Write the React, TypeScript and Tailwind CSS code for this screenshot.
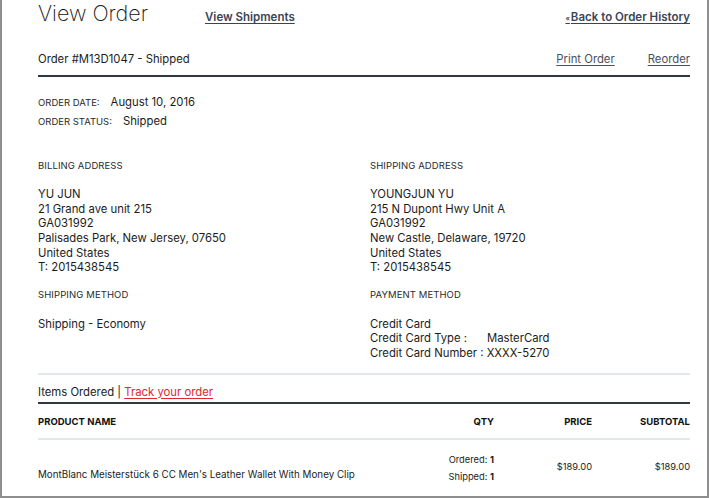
import React from "react";

function Label({ children }: { children: React.ReactNode }) {
  return (
    <div className="h-[14px] flex items-center text-[9.5px] uppercase text-[#2a2a2a] tracking-[0.1px]">
      {children}
    </div>
  );
}

export default function App() {
  return (
    <div className="w-[709px] h-[498px] border-x-2 border-b-2 border-[#8e8e8e] bg-white pl-[36px] pr-[17px] overflow-hidden text-[#1c1c1c] font-[Inter,sans-serif] flex flex-col">
      {/* Title row */}
      <div className="flex items-baseline">
        <div className="w-[167px] text-[21.5px] leading-[26px] font-extralight text-[#111]">View Order</div>
        <a className="text-[11.5px] font-semibold text-[#3b4457] underline underline-offset-2">View Shipments</a>
        <a className="ml-auto text-[11.5px] font-semibold text-[#3b4457] underline underline-offset-2">
          <span className="text-[7px] mr-[1px]">«</span>Back to Order History
        </a>
      </div>

      {/* Order row */}
      <div className="mt-[23px] h-[20px] flex items-center text-[11.3px]">
        <span>Order #M13D1047 - Shipped</span>
        <a className="ml-auto text-[#4a5060] underline underline-offset-2">Print Order</a>
        <a className="ml-[33px] text-[#4a5060] underline underline-offset-2">Reorder</a>
      </div>
      <div className="mt-[6px] h-[2px] bg-[#2f3646]" />

      {/* Order date/status */}
      <div className="mt-[16px] flex flex-col text-[11.3px]">
        <div className="h-[19px] flex items-center">
          <span className="text-[9.5px] uppercase text-[#2a2a2a]">Order Date:</span>
          <span className="ml-[11px]">August 10, 2016</span>
        </div>
        <div className="h-[19px] flex items-center">
          <span className="text-[9.5px] uppercase text-[#2a2a2a]">Order Status:</span>
          <span className="ml-[11px]">Shipped</span>
        </div>
      </div>

      {/* Addresses */}
      <div className="mt-[28px] grid grid-cols-[332px_1fr] text-[11.3px] leading-[14.6px]">
        <div>
          <Label>Billing Address</Label>
          <div className="mt-[14px]">
            <div>YU JUN</div>
            <div>21 Grand ave unit 215</div>
            <div>GA031992</div>
            <div>Palisades Park, New Jersey, 07650</div>
            <div>United States</div>
            <div>T: 2015438545</div>
          </div>
          <div className="mt-[13px]">
            <Label>Shipping Method</Label>
          </div>
          <div className="mt-[15px]">Shipping - Economy</div>
        </div>
        <div>
          <Label>Shipping Address</Label>
          <div className="mt-[14px]">
            <div>YOUNGJUN YU</div>
            <div>215 N Dupont Hwy Unit A</div>
            <div>GA031992</div>
            <div>New Castle, Delaware, 19720</div>
            <div>United States</div>
            <div>T: 2015438545</div>
          </div>
          <div className="mt-[13px]">
            <Label>Payment Method</Label>
          </div>
          <div className="mt-[15px]">
            <div>Credit Card</div>
            <div>
              <span className="inline-block w-[117px]">Credit Card Type :</span>MasterCard
            </div>
            <div>Credit Card Number : XXXX-5270</div>
          </div>
        </div>
      </div>

      <div className="mt-[12px] h-[2px] bg-[#e1e5ec]" />

      {/* Items ordered */}
      <div className="mt-[8px] h-[19px] flex items-center text-[11.3px] text-[#222]">
        <span>Items Ordered |&nbsp;</span>
        <a className="text-[#e3262e] underline underline-offset-2">Track your order</a>
      </div>
      <div className="h-[2px] bg-[#2f3646]" />

      {/* Table header */}
      <div className="h-[34px] pt-[3px] flex items-center text-[9.5px] font-bold uppercase text-[#111]">
        <div className="flex-1">Product Name</div>
        <div className="w-[100px] text-right">Qty</div>
        <div className="w-[98px] text-right">Price</div>
        <div className="w-[98px] text-right">Subtotal</div>
      </div>
      <div className="h-[2px] bg-[#e1e5ec]" />

      {/* Item row */}
      <div className="flex text-[9.3px] leading-[17px] text-[#1c1c1c]">
        <div className="flex-1 pt-[26.5px] text-[9.8px]">MontBlanc Meisterstück 6 CC Men's Leather Wallet With Money Clip</div>
        <div className="w-[100px] pt-[11.5px] text-right">
          <div>Ordered: <b>1</b></div>
          <div>Shipped: <b>1</b></div>
        </div>
        <div className="w-[98px] pt-[18px] text-right">$189.00</div>
        <div className="w-[98px] pt-[18px] text-right">$189.00</div>
      </div>
    </div>
  );
}
